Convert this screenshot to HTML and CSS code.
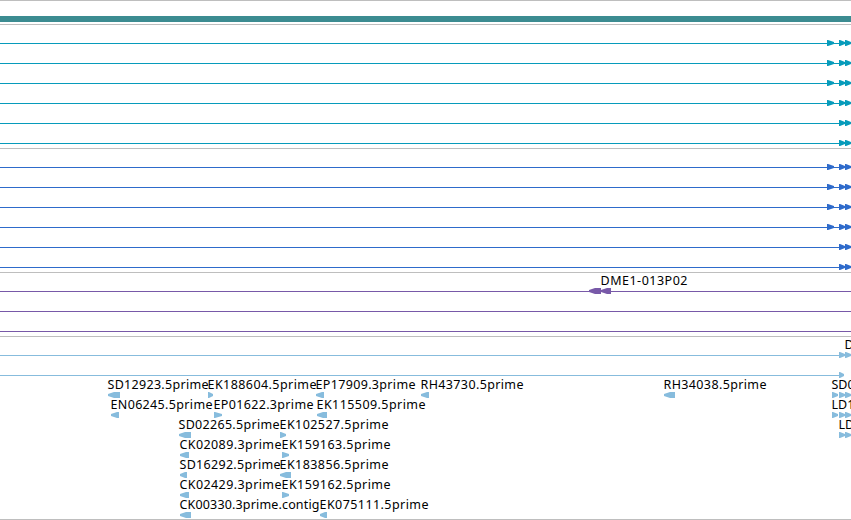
FILE: index.html
```
<!DOCTYPE html>
<html lang="en">
<head>
    <meta charset="UTF-8">
    <title>Genome Alignments</title>
    <link rel="stylesheet" href="styles.css">
</head>
<body>
    <main class="browser"></main>
    <script src="tracks.js"></script>
</body>
</html>
```
FILE: styles.css
```
body {
    margin: 0;
    background: #fff;
    overflow: hidden;
}

.browser {
    display: flex;
    flex-direction: column;
    border-bottom: 1px solid #bebebe;
}

.track {
    box-sizing: border-box;
    border-top: 1px solid #bebebe;
    overflow: hidden;
}

.track svg {
    display: block;
    width: 851px;
}

.track text {
    font-family: "Noto Sans", "DejaVu Sans", sans-serif;
    font-size: 12.5px;
    fill: #000;
}

.contig { fill: #3c8c91; }
.cyan { fill: #079bbb; }
.blue { fill: #2e6bcb; }
.purple { fill: #7859a8; }
.sky { fill: #87bcdd; }
```
FILE: tracks.js
```
// Features are [start, end, strand], labels are [x, width, text].
// Row y values are relative to the top of their track.
const exons = [[827, 834, 1], [839, 845, 1], [845, 851, 1]];
const lastExons = exons.slice(1);

function geneRows() {
    return [0, 1, 2, 3, 4, 5].map(i => ({
        y: 18 + i * 20,
        line: 851,
        features: i < 4 ? exons : lastExons
    }));
}

const tracks = [
    { height: 24, color: 'contig', bar: [15, 6], rows: [] },
    { height: 124, color: 'cyan', rows: geneRows() },
    { height: 124, color: 'blue', rows: geneRows() },
    { height: 64, color: 'purple', rows: [
        { y: 18, line: 851, features: [[589, 601, -1], [601, 611, -1]], labels: [[600, 87, 'DME1-013P02']] },
        { y: 38, line: 851 },
        { y: 58, line: 851 }
    ] },
    { height: 183, color: 'sky', rows: [
        { y: 18, line: 851, features: lastExons, labels: [[844, 0, 'D']] },
        { y: 38, line: 840, features: [[839, 844, 1]] },
        { y: 58,
          features: [[108, 120, -1], [208, 213, 1], [316, 324, -1], [421, 429, -1], [664, 675, -1], [832, 838, 1], [839, 845, 1], [845, 851, 1]],
          labels: [[107, 101, 'SD12923.5prime'], [207, 109, 'EK188604.5prime'], [315, 100, 'EP17909.3prime'], [420, 103, 'RH43730.5prime'], [663, 103, 'RH34038.5prime'], [831, 0, 'SD0']] },
        { y: 78,
          features: [[111, 119, -1], [214, 222, 1], [317, 327, -1], [832, 838, 1], [839, 845, 1], [845, 851, 1]],
          labels: [[110, 102, 'EN06245.5prime'], [213, 100, 'EP01622.3prime'], [316, 109, 'EK115509.5prime'], [831, 0, 'LD1']] },
        { y: 98,
          features: [[179, 191, -1], [280, 286, 1], [839, 845, 1], [845, 851, 1]],
          labels: [[178, 101, 'SD02265.5prime'], [279, 109, 'EK102527.5prime'], [838, 0, 'LD']] },
        { y: 118,
          features: [[180, 189, -1], [282, 289, 1]],
          labels: [[179, 102, 'CK02089.3prime'], [281, 109, 'EK159163.5prime']] },
        { y: 138,
          features: [[180, 187, -1], [280, 291, -1]],
          labels: [[179, 101, 'SD16292.5prime'], [279, 109, 'EK183856.5prime']] },
        { y: 158,
          features: [[180, 189, -1], [282, 289, 1]],
          labels: [[179, 102, 'CK02429.3prime'], [281, 109, 'EK159162.5prime']] },
        { y: 178,
          features: [[180, 191, -1], [320, 327, -1]],
          labels: [[179, 140, 'CK00330.3prime.contig'], [319, 109, 'EK075111.5prime']] }
    ] }
];

function arrow([start, end, strand], y) {
    const back = strand > 0 ? start : end;
    const tip = strand > 0 ? end : start;
    const body = strand > 0 ? start + 1 : Math.min(start + 6, end - 2);
    return `<path d="M${back} ${y - 3}H${body}L${tip} ${y - 1}V${y + 1}L${body} ${y + 3}H${back}Z"/>`;
}

function label([x, width, text], y) {
    const fit = width ? ` textLength="${width}"` : '';
    return `<text x="${x + 0.5}" y="${y - 6}"${fit}>${text}</text>`;
}

document.querySelector('.browser').innerHTML = tracks.map(track => {
    let shapes = track.bar ? `<rect y="${track.bar[0]}" width="851" height="${track.bar[1]}"/>` : '';
    for (const row of track.rows) {
        if (row.line) shapes += `<rect y="${row.y}" width="${row.line}" height="1"/>`;
        shapes += (row.features || []).map(f => arrow(f, row.y)).join('');
        shapes += (row.labels || []).map(l => label(l, row.y)).join('');
    }
    return `<section class="track"><svg class="${track.color}" height="${track.height - 1}">${shapes}</svg></section>`;
}).join('');
```
